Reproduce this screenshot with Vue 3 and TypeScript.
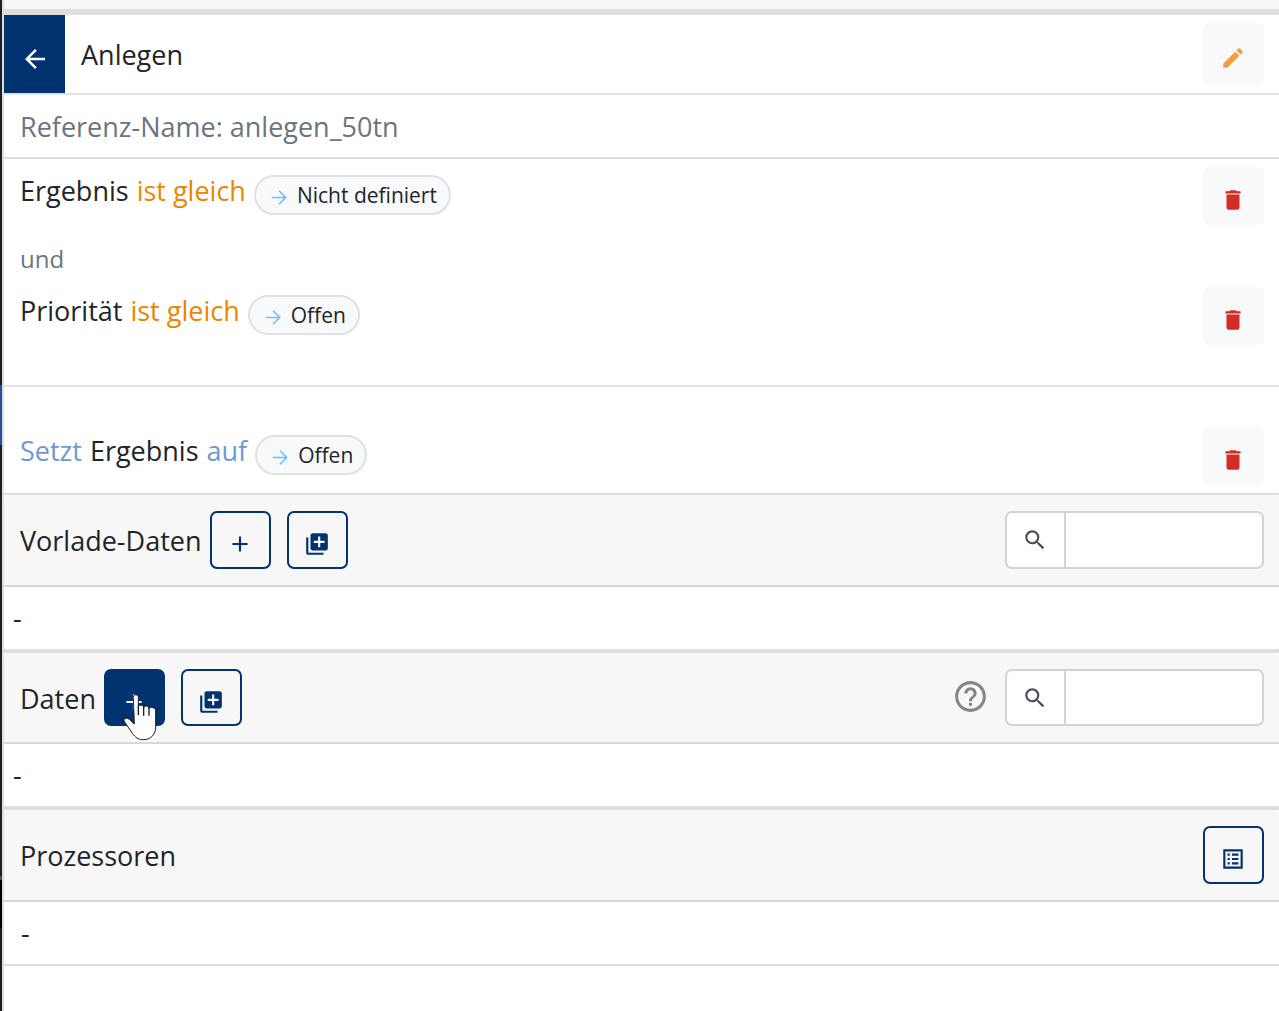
<script setup lang="ts">
import { ref } from 'vue'

interface Rule {
  id: number
  parts: { text: string; tone: 'plain' | 'condition' | 'action' }[]
  value: string
}

const icons = {
  back: 'M20 11H7.83l5.59-5.59L12 4l-8 8 8 8 1.41-1.41L7.83 13H20v-2z',
  forward: 'M4 11.1h12.4l-5.500-5.500L12.100 4.400l7.600 7.600-7.600 7.600-1.200-1.200 5.500-5.500H4z',
  edit: 'M3 17.25V21h3.75L17.81 9.94l-3.75-3.75L3 17.25zM20.71 7.04a1 1 0 0 0 0-1.41l-2.34-2.34a1 1 0 0 0-1.41 0l-1.83 1.83 3.75 3.75 1.83-1.83z',
  trash: 'M6 19c0 1.1.9 2 2 2h8c1.1 0 2-.9 2-2V7H6v12zM19 4h-3.500l-1-1h-5l-1 1H5v2h14V4z',
  plus: 'M19 13h-6v6h-2v-6H5v-2h6V5h2v6h6v2z',
  addAll: 'M4 6H2v14c0 1.1.9 2 2 2h14v-2H4V6zm16-4H8c-1.100 0-2 .9-2 2v12c0 1.100.9 2 2 2h12c1.100 0 2-.9 2-2V4c0-1.100-.9-2-2-2zm-1 9h-4v4h-2v-4H9V9h4V5h2v4h4v2z',
  search: 'M15.500 14h-.79l-.28-.27A6.471 6.471 0 0 0 16 9.500 6.500 6.500 0 1 0 9.500 16c1.610 0 3.090-.59 4.230-1.570l.27.28v.79l5 4.990L20.490 19l-4.990-5zm-6 0C7.010 14 5 11.990 5 9.500S7.010 5 9.500 5 14 7.010 14 9.500 11.990 14 9.500 14z',
  help: 'M11 18h2v-2h-2v2zm1-16C6.480 2 2 6.480 2 12s4.480 10 10 10 10-4.480 10-10S17.520 2 12 2zm0 18c-4.410 0-8-3.590-8-8s3.590-8 8-8 8 3.590 8 8-3.590 8-8 8zm0-14c-2.210 0-4 1.790-4 4h2c0-1.100.9-2 2-2s2 .9 2 2c0 2-3 1.750-3 5h2c0-2.250 3-2.500 3-5 0-2.210-1.790-4-4-4z',
  list: 'M3 3v18h18V3H3zm16 16H5V5h14v14zM11 7h6v2h-6V7zm0 4h6v2h-6v-2zm0 4h6v2h-6v-2zM7 7h2v2H7V7zm0 4h2v2H7v-2zm0 4h2v2H7v-2z',
}

const conditions: Rule[] = [
  { id: 1, parts: [{ text: 'Ergebnis', tone: 'plain' }, { text: 'ist gleich', tone: 'condition' }], value: 'Nicht definiert' },
  { id: 2, parts: [{ text: 'Priorität', tone: 'plain' }, { text: 'ist gleich', tone: 'condition' }], value: 'Offen' },
]

const actions: Rule[] = [
  { id: 3, parts: [{ text: 'Setzt', tone: 'action' }, { text: 'Ergebnis', tone: 'plain' }, { text: 'auf', tone: 'action' }], value: 'Offen' },
]

const preloadQuery = ref('')
const dataQuery = ref('')
</script>

<template>
  <div class="shell">
    <div class="edge"></div>
    <main class="panel">
      <div class="top-strip"></div>

      <header class="title-bar">
        <button class="back" type="button" aria-label="Zurück">
          <svg class="icon icon-back" viewBox="0 0 24 24"><path :d="icons.back" /></svg>
        </button>
        <h1 class="title">Anlegen</h1>
        <button class="btn light tall edit push" type="button" aria-label="Bearbeiten">
          <svg class="icon" viewBox="0 0 24 24"><path :d="icons.edit" /></svg>
        </button>
      </header>

      <p class="reference">Referenz-Name: anlegen_50tn</p>

      <section class="rules conditions">
        <template v-for="(rule, i) in conditions" :key="rule.id">
          <p v-if="i > 0" class="joiner">und</p>
          <div class="rule">
            <span v-for="part in rule.parts" :key="part.text" :class="['word', part.tone]">{{ part.text }}</span>
            <span class="pill">
              <svg class="icon icon-pill" viewBox="0 0 24 24"><path :d="icons.forward" /></svg>
              <span>{{ rule.value }}</span>
            </span>
            <button class="btn light danger push" type="button" aria-label="Löschen">
              <svg class="icon" viewBox="0 0 24 24"><path :d="icons.trash" /></svg>
            </button>
          </div>
        </template>
      </section>

      <section class="rules actions">
        <div v-for="rule in actions" :key="rule.id" class="rule">
          <span v-for="part in rule.parts" :key="part.text" :class="['word', part.tone]">{{ part.text }}</span>
          <span class="pill">
            <svg class="icon icon-pill" viewBox="0 0 24 24"><path :d="icons.forward" /></svg>
            <span>{{ rule.value }}</span>
          </span>
          <button class="btn light danger push" type="button" aria-label="Löschen">
            <svg class="icon" viewBox="0 0 24 24"><path :d="icons.trash" /></svg>
          </button>
        </div>
      </section>

      <section class="group">
        <div class="group-head">
          <h2 class="title">Vorlade-Daten</h2>
          <button class="btn outline" type="button" aria-label="Hinzufügen">
            <svg class="icon" viewBox="0 0 24 24"><path :d="icons.plus" /></svg>
          </button>
          <button class="btn outline second" type="button" aria-label="Mehrere hinzufügen">
            <svg class="icon" viewBox="0 0 24 24"><path :d="icons.addAll" /></svg>
          </button>
          <div class="search push">
            <label class="search-label" for="preload-search" aria-label="Suchen">
              <svg class="icon" viewBox="0 0 24 24"><path :d="icons.search" /></svg>
            </label>
            <input id="preload-search" v-model="preloadQuery" class="search-input" type="text" />
          </div>
        </div>
        <p class="empty">-</p>
      </section>

      <section class="group divided snug">
        <div class="group-head">
          <h2 class="title">Daten</h2>
          <button class="btn outline filled" type="button" aria-label="Hinzufügen">
            <svg class="icon" viewBox="0 0 24 24"><path :d="icons.plus" /></svg>
            <svg class="pointer" viewBox="366 158 111 144">
              <path
                d="M400 171q0-8 7.500-8t7.500 8v28q3-5 8-5 7 0 8 7 3-4 8-4 7 0 8 7 3-3 7-3 7 0 13 7v52c0 22-14 38-37 38-16 0-24-7-33-19l-23-34c-4-6-1-11 5-11 5 0 9 3 12 6l12 11z"
                fill="#fff" stroke="#1c1c2b" stroke-width="3" stroke-linejoin="round"
              />
              <path d="M415 198v25M431 200v25M447 203v22" fill="none" stroke="#1c1c2b" stroke-width="4" stroke-linecap="round" />
            </svg>
          </button>
          <button class="btn outline second" type="button" aria-label="Mehrere hinzufügen">
            <svg class="icon" viewBox="0 0 24 24"><path :d="icons.addAll" /></svg>
          </button>
          <svg class="icon icon-help push" viewBox="0 0 24 24"><path :d="icons.help" /></svg>
          <div class="search">
            <label class="search-label" for="data-search" aria-label="Suchen">
              <svg class="icon" viewBox="0 0 24 24"><path :d="icons.search" /></svg>
            </label>
            <input id="data-search" v-model="dataQuery" class="search-input" type="text" />
          </div>
        </div>
        <p class="empty">-</p>
      </section>

      <section class="group divided last">
        <div class="group-head">
          <h2 class="title">Prozessoren</h2>
          <button class="btn outline push" type="button" aria-label="Prozessoren auswählen">
            <svg class="icon" viewBox="0 0 24 24"><path :d="icons.list" /></svg>
          </button>
        </div>
        <p class="empty">-</p>
      </section>
    </main>
  </div>
</template>

<style>
body {
  margin: 0;
  background: #fff;
}
</style>

<style scoped>
.shell {
  --control-height: 58px;
  display: flex;
  min-height: 100vh;
  font-family: "Open Sans", "Noto Sans", sans-serif;
  font-size: 27px;
  line-height: 40px;
  color: #212529;
}
.shell * {
  box-sizing: border-box;
}
.edge {
  flex: none;
  width: 4px;
  border-right: 2px solid #dedede;
  background: linear-gradient(#1f1d25 385px, #24509a 385px 445px, #1f1d25 445px 876px, #4a4a50 876px 880px, #000 880px 928px, #1f1d25 928px);
}
.panel {
  flex: 1;
  min-width: 0;
}
.top-strip {
  height: 15px;
  background: #f7f7f7;
  border-bottom: 6px solid #dedede;
}
.title-bar {
  display: flex;
  align-items: center;
  height: 80px;
  padding-right: 15px;
  border-bottom: 2px solid #dee2e6;
}
.title {
  margin: 0;
  padding-top: 2px;
  font-size: 27px;
  font-weight: 400;
}
.back {
  display: flex;
  align-items: center;
  justify-content: center;
  align-self: stretch;
  width: 61px;
  margin-right: 16px;
  padding: 9px 0 0;
  border: 0;
  background: #00336f;
  color: #fff;
}
.push {
  margin-left: auto;
}
.icon {
  flex: none;
  display: block;
  width: 26px;
  height: 26px;
  fill: currentColor;
}
.icon-back {
  width: 30px;
  height: 30px;
}
.icon-pill {
  width: 23px;
  height: 23px;
  margin-top: 4px;
  color: #6ec1ff;
}
.icon-help {
  width: 37px;
  height: 37px;
  margin-right: 8px;
  margin-bottom: 2px;
  color: #868686;
}
.btn {
  flex: none;
  display: flex;
  align-items: center;
  justify-content: center;
  width: 61px;
  height: var(--control-height);
  padding: 8px 1px 0 0;
  border: 2px solid transparent;
  border-radius: 7px;
}
.light {
  background: #f8f9fa;
}
.tall {
  height: 62px;
}
.edit {
  color: #f79a3e;
}
.danger {
  color: #d22d27;
}
.outline {
  background: transparent;
  border-color: #00336f;
  color: #00336f;
}
.filled {
  position: relative;
  background: #00336f;
  color: #fff;
}
.second {
  margin-left: 8px;
}
.pointer {
  position: absolute;
  left: 16px;
  top: 22px;
  width: 37px;
  height: 48px;
}
.reference {
  margin: 0;
  padding: 12px 16px 10px;
  color: #6c757d;
  border-bottom: 2px solid #dedede;
}
.rules {
  padding: 8px 15px 8px 16px;
  border-bottom: 2px solid #dedede;
}
.conditions {
  padding-bottom: 40px;
  border-color: #e5e5e5;
}
.actions {
  padding-top: 40px;
}
.rule {
  display: flex;
  align-items: flex-start;
  gap: 8px;
}
.word {
  line-height: 48px;
}
.condition {
  color: #ea8600;
}
.action {
  color: #6f98d3;
}
.pill {
  display: flex;
  align-items: center;
  gap: 6px;
  height: 40px;
  margin-top: 8px;
  padding: 0 12px;
  border: 2px solid #dee2e6;
  border-radius: 20px;
  background: #f8f9fa;
  font-size: 21px;
  line-height: 36px;
}
.joiner {
  margin: 0;
  padding: 14px 0 8px;
  font-size: 24px;
  color: #6c757d;
}
.divided {
  border-top: 4px solid #dedede;
}
.snug {
  --control-height: 57px;
}
.group-head {
  display: flex;
  align-items: center;
  gap: 8px;
  padding: 16px 15px 16px 16px;
  background: #f7f7f7;
  border-bottom: 2px solid #d8d8d8;
  border-radius: 5px 5px 0 0;
}
.search {
  display: flex;
  width: 259px;
  height: var(--control-height);
  border: 2px solid #ced4da;
  border-radius: 7px;
  background: #fff;
  overflow: hidden;
}
.search-label {
  display: flex;
  align-items: center;
  justify-content: center;
  width: 59px;
  padding-right: 1px;
  border-right: 2px solid #ced4da;
  color: #495057;
}
.search-input {
  flex: 1;
  min-width: 0;
  padding: 0 12px;
  border: 0;
  outline: 0;
  background: transparent;
  font: inherit;
}
.empty {
  margin: 0;
  padding: 11px 9px;
}
.last .empty {
  padding-left: 17px;
  border-bottom: 2px solid #dedede;
}
</style>
